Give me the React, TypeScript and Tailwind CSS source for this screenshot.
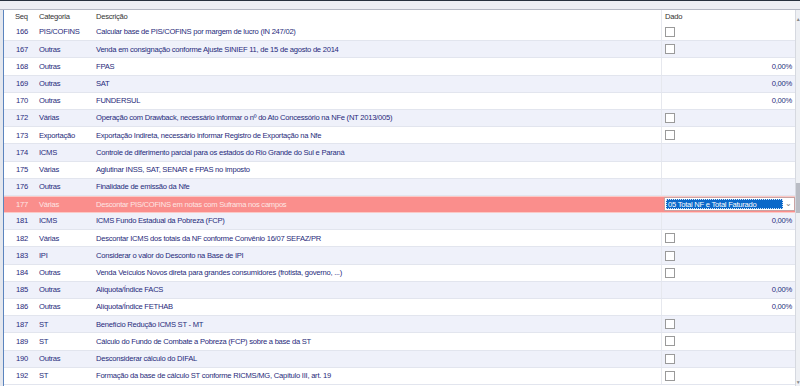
import React from 'react';

type Row = {
    seq: string;
    cat: string;
    desc: string;
    kind: 'check' | 'pct' | 'none' | 'select';
};

const rows: Row[] = [
    { seq: '166', cat: 'PIS/COFINS', desc: 'Calcular base de PIS/COFINS por margem de lucro (IN 247/02)', kind: 'check' },
    { seq: '167', cat: 'Outras', desc: 'Venda em consignação conforme Ajuste SINIEF 11, de 15 de agosto de 2014', kind: 'check' },
    { seq: '168', cat: 'Outras', desc: 'FPAS', kind: 'pct' },
    { seq: '169', cat: 'Outras', desc: 'SAT', kind: 'pct' },
    { seq: '170', cat: 'Outras', desc: 'FUNDERSUL', kind: 'pct' },
    { seq: '172', cat: 'Várias', desc: 'Operação com Drawback, necessário informar o nº do Ato Concessório na NFe (NT 2013/005)', kind: 'check' },
    { seq: '173', cat: 'Exportação', desc: 'Exportação Indireta, necessário informar Registro de Exportação na Nfe', kind: 'check' },
    { seq: '174', cat: 'ICMS', desc: 'Controle de diferimento parcial para os estados do Rio Grande do Sul e Paraná', kind: 'none' },
    { seq: '175', cat: 'Várias', desc: 'Aglutinar INSS, SAT, SENAR e FPAS no imposto', kind: 'none' },
    { seq: '176', cat: 'Outras', desc: 'Finalidade de emissão da Nfe', kind: 'none' },
    { seq: '177', cat: 'Várias', desc: 'Descontar PIS/COFINS em notas com Suframa nos campos', kind: 'select' },
    { seq: '181', cat: 'ICMS', desc: 'ICMS Fundo Estadual da Pobreza (FCP)', kind: 'pct' },
    { seq: '182', cat: 'Várias', desc: 'Descontar ICMS dos totais da NF conforme Convênio 16/07 SEFAZ/PR', kind: 'check' },
    { seq: '183', cat: 'IPI', desc: 'Considerar o valor do Desconto na Base de IPI', kind: 'check' },
    { seq: '184', cat: 'Outras', desc: 'Venda Veículos Novos direta para grandes consumidores (frotista, governo, ...)', kind: 'check' },
    { seq: '185', cat: 'Outras', desc: 'Alíquota/Índice FACS', kind: 'pct' },
    { seq: '186', cat: 'Outras', desc: 'Alíquota/Índice FETHAB', kind: 'pct' },
    { seq: '187', cat: 'ST', desc: 'Benefício Redução ICMS ST - MT', kind: 'check' },
    { seq: '189', cat: 'ST', desc: 'Cálculo do Fundo de Combate a Pobreza (FCP) sobre a base da ST', kind: 'check' },
    { seq: '190', cat: 'Outras', desc: 'Desconsiderar cálculo do DIFAL', kind: 'check' },
    { seq: '192', cat: 'ST', desc: 'Formação da base de cálculo ST conforme RICMS/MG, Capítulo III, art. 19', kind: 'check' },
];

const gridCols = 'grid grid-cols-[35px_56px_1fr_134px]';

const DadoCell = ({ kind }: { kind: Row['kind'] }) => {
    if (kind === 'check') {
        return (
            <div className="flex items-center h-full pl-[3px]">
                <div className="w-[10px] h-[10px] border border-[#9a9a9a] bg-white" />
            </div>
        );
    }
    if (kind === 'pct') {
        return <div className="flex items-center justify-end h-full pr-[3px]">0,00%</div>;
    }
    if (kind === 'select') {
        return (
            <div className="flex items-center h-full pl-[3px]">
                <div className="flex items-center w-[131px] h-[14px] bg-white border border-[#c9a3a3] p-[1px]">
                    <div className="w-[117px] h-full bg-[#0b68c9] outline-1 outline-dotted outline-[#d9e6f5] -outline-offset-1 text-white flex items-center pl-[2px] whitespace-nowrap overflow-hidden">
                        05 Total NF e Total Faturado
                    </div>
                    <span className="flex-1 text-center text-[#7a7a7a] text-[8px] leading-none">⌄</span>
                </div>
            </div>
        );
    }
    return null;
};

export default function App() {
    return (
        <div className="w-[800px] h-[386px] overflow-hidden bg-white flex flex-col font-['Liberation_Sans',Arial,sans-serif] text-[7.6px] tracking-[-0.25px]">
            {/* window chrome */}
            <div className="h-[1px] bg-[#26303e]" />
            <div className="h-[9px] bg-[#eceef4] border-b border-[#b4b8c4]" />

            <div className="flex flex-1 min-h-0">
                <div className="w-[3px] bg-[#e4e7ee] border-r-[1.5px] border-[#5b84be] box-content" />

                <div className="flex-1 flex flex-col min-w-0 overflow-hidden">
                    {/* header */}
                    <div className={`${gridCols} h-[14px] text-[#333333] items-center shrink-0`}>
                        <div className="pl-[11px]">Seq</div>
                        <div>Categoria</div>
                        <div className="pl-[1px]">Descrição</div>
                        <div className="pl-[3px] h-full flex items-center border-l border-[#e6e8ee]">Dado</div>
                    </div>

                    {rows.map((r, i) => {
                        const selected = r.kind === 'select';
                        const bg = selected ? 'bg-[#fa8e8c] text-[#fde6e4] border-y border-[#fcc9c6]' : i % 2 === 1 ? 'bg-[#eff1fa] text-[#1f2a7a] border-b border-[#e2e5ee]' : 'bg-white text-[#1f2a7a] border-b border-[#e2e5ee]';
                        return (
                            <div key={r.seq} className={`${gridCols} h-[17.2px] shrink-0 items-center whitespace-nowrap ${bg}`}>
                                <div className="pl-[12px]">{r.seq}</div>
                                <div>{r.cat}</div>
                                <div className="overflow-hidden pl-[1px]">{r.desc}</div>
                                <div className={`h-full ${selected ? '' : 'border-l border-[#e6e8ee]'}`}>
                                    <DadoCell kind={r.kind} />
                                </div>
                            </div>
                        );
                    })}
                </div>

                {/* scrollbar */}
                <div className="w-[5px] flex flex-col bg-[#eef0f4] border-l border-[#d6d9e0]">
                    <div className="h-[12px] flex items-end justify-center text-[5px] text-[#888] leading-none">▲</div>
                    <div className="h-[161px]" />
                    <div className="h-[30px] bg-[#b9bcc4]" />
                    <div className="flex-1" />
                    <div className="h-[6px] flex items-start justify-center text-[5px] text-[#888] leading-none">▼</div>
                </div>
            </div>
        </div>
    );
}
